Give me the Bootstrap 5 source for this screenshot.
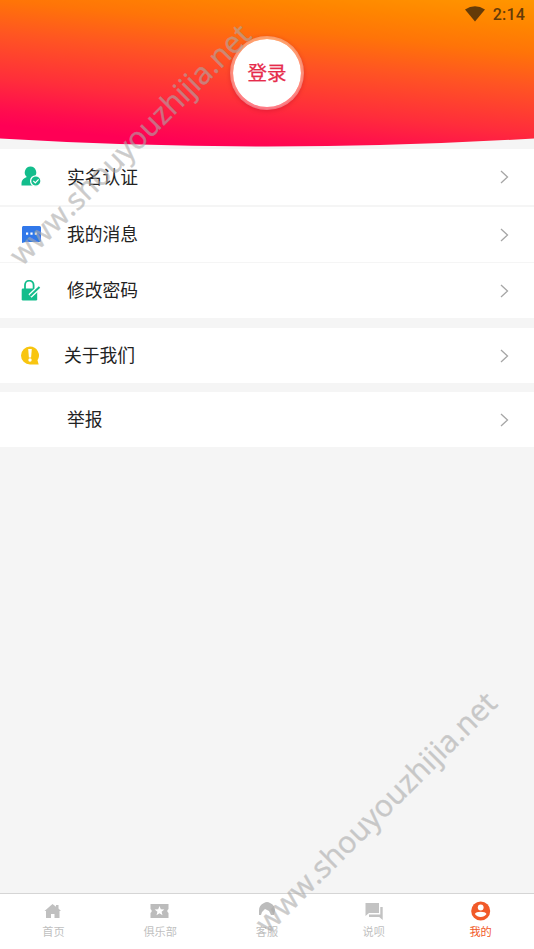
<!DOCTYPE html>
<html lang="zh-CN">
<head>
<meta charset="utf-8">
<meta name="viewport" content="width=device-width, initial-scale=1">
<title>我的</title>
<link href="https://cdn.jsdelivr.net/npm/bootstrap@5.3.0/dist/css/bootstrap.min.css" rel="stylesheet">
<style>
body{height:949px;overflow:hidden;background:#f5f5f5;font-family:Roboto,"Noto Sans CJK SC",sans-serif;color:#222}
.hero{height:149px}
.hero-bg{left:0;top:0;width:534px;height:149px}
.status{height:28px;padding-right:9px;color:#653b08;font-size:16px;letter-spacing:.2px;font-weight:500}
.status span{padding-top:1px}
.login{width:74px;height:74px;margin-top:8px;border:3px solid rgba(255,255,255,.38);background:#fff;background-clip:padding-box;color:#e62b4b;font-size:19.5px;line-height:1;padding-top:1px;-webkit-text-stroke:.25px #e62b4b;box-shadow:0 1px 4px rgba(160,0,30,.3)}
.entry{height:55px;padding:0 25px 0 20px;background:#fff;font-size:17.8px;line-height:24px;color:#222}
.entry svg{flex:none}
.entry .txt{margin-left:25px;padding-top:1px}
.about .txt{margin-left:22px}
.first{height:56px}
.second{margin-top:2px}
.third{margin-top:1px}
.about{margin-top:10px}
.report{margin-top:9px}
.tabs{height:56px;border-top:1px solid #d5d5d5;background:#fff}
.tab-item{color:#bfbfbf;font-size:11.2px;line-height:14px;width:20%;padding-top:7px}
.tab-item svg{margin-bottom:5px}
.tab-item.current{color:#f15a29}
.wm{left:0;top:0;pointer-events:none}
</style>
<script src="https://cdn.jsdelivr.net/npm/bootstrap@5.3.0/dist/js/bootstrap.bundle.min.js"></script>
</head>
<body class="d-flex flex-column position-relative">
<svg width="0" height="0" class="position-absolute"><defs><symbol id="chev" viewBox="0 0 10 16"><path d="M2 2 8.500 8 2 14" fill="none" stroke="#a6a6a6" stroke-width="1.300"/></symbol></defs></svg>
<header class="hero position-relative flex-shrink-0">
  <svg class="hero-bg position-absolute" viewBox="0 0 534 149">
    <defs><linearGradient id="heat" gradientUnits="userSpaceOnUse" x1="267" y1="-32" x2="249" y2="150"><stop offset="0" stop-color="#ff9a00"/><stop offset=".18" stop-color="#ff8500"/><stop offset=".32" stop-color="#ff7408"/><stop offset=".5" stop-color="#ff5522"/><stop offset=".75" stop-color="#ff2d3b"/><stop offset=".92" stop-color="#ff0c4e"/><stop offset="1" stop-color="#ff0055"/></linearGradient></defs>
    <path d="M0 0H534V138.500Q400 146.500 267 146.500T0 138.500Z" fill="url(#heat)"/>
  </svg>
  <div class="position-relative">
    <div class="status d-flex align-items-center justify-content-end">
      <svg class="me-2" width="20" height="16" viewBox="0 0 20 16"><path d="M0 3.500Q10-3 20 3.500L10 15.500Z" fill="currentColor"/></svg><span>2:14</span>
    </div>
    <div class="login rounded-circle mx-auto d-flex align-items-center justify-content-center">登录</div>
  </div>
</header>
<main class="flex-grow-1">
  <div class="entry first d-flex align-items-center">
    <svg width="22" height="22" viewBox="0 0 22 22"><path d="M10.500 .5a6 6 0 0 1 3.700 10.500c2 1 3.800 2.500 4.300 4.500l.5 4H1.500V17c0-3 2.500-5 5.300-6A6 6 0 0 1 10.500 .5z" fill="#13bd8c"/><circle cx="15.800" cy="15" r="5.200" fill="#13bd8c" stroke="#fff" stroke-width="1.300"/><path d="m13.300 14.800 2 2 3.300-3.500" fill="none" stroke="#fff" stroke-width="1.200"/></svg>
    <span class="txt">实名认证</span><svg class="ms-auto" width="10" height="16"><use href="#chev"/></svg>
  </div>
  <div class="entry second d-flex align-items-center">
    <svg width="22" height="22" viewBox="0 0 22 22"><path d="M3.200 2h16.300A1.500 1.500 0 0 1 21 3.500v13a1.500 1.500 0 0 1-1.500 1.500H5.500L2 19V3.500Q2 2 3.200 2z" fill="#3178ea"/><path d="M6 8.500h2.200v2.200H6zm4.400 0h2.200v2.200h-2.200zm4.400 0H17v2.200h-2.200z" fill="#fff"/></svg>
    <span class="txt">我的消息</span><svg class="ms-auto" width="10" height="16"><use href="#chev"/></svg>
  </div>
  <div class="entry third d-flex align-items-center">
    <svg width="22" height="22" viewBox="0 0 22 22"><path d="M5 10V5a4.300 4.300 0 0 1 8.600 0V10" fill="none" stroke="#13bd8c" stroke-width="1.800"/><rect x="1.700" y="8.500" width="15.500" height="12" rx="1.200" fill="#13bd8c"/><path d="m10 16 9.500-9" stroke="#fff" stroke-width="4.500"/><path d="m10 16 9.500-9" stroke="#13bd8c" stroke-width="2"/></svg>
    <span class="txt">修改密码</span><svg class="ms-auto" width="10" height="16"><use href="#chev"/></svg>
  </div>
  <div class="entry about d-flex align-items-center">
    <svg width="22" height="22" viewBox="0 0 22 22"><path d="M10 1.500a8.900 8.900 0 0 1 7.500 13.700L18.700 19.500H10a9 9 0 0 1 0-18z" fill="#f8c510"/><path d="M8.200 4h3.600l-.7 8.500H8.900z" fill="#fff"/><circle cx="10" cy="15" r="1.700" fill="#fff"/></svg>
    <span class="txt">关于我们</span><svg class="ms-auto" width="10" height="16"><use href="#chev"/></svg>
  </div>
  <div class="entry report d-flex align-items-center">
    <svg width="22" height="22"></svg>
    <span class="txt">举报</span><svg class="ms-auto" width="10" height="16"><use href="#chev"/></svg>
  </div>
</main>
<nav class="tabs d-flex flex-shrink-0">
  <div class="tab-item d-flex flex-column align-items-center"><svg width="20" height="20" viewBox="0 0 20 20"><path d="M9.500 3 1.500 10H3v7h5v-4h3.500v4h5v-7H18l-2.500-2.500V4h-2.500v1.800z" fill="#c0c0c0"/></svg>首页</div>
  <div class="tab-item d-flex flex-column align-items-center"><svg width="20" height="20" viewBox="0 0 20 20"><path d="M.5 3h18v5q-2.500 2 0 4v5H.5v-5q2.500-2 0-4z" fill="#bcbcbc"/><path d="m9.500 5 1.300 3.300 3.600.2-2.800 2.300.9 3.500-3-2-3 2 .9-3.500-2.800-2.300 3.600-.2z" fill="#fff"/></svg>俱乐部</div>
  <div class="tab-item d-flex flex-column align-items-center"><svg width="20" height="20" viewBox="0 0 20 20"><path d="M2 14V9.500A8 8 0 0 1 7 2q3-2 6 0a8 8 0 0 1 5 7.500L17 14h-3l-2-4-4-2-3 3-1 3z" fill="#bcbcbc"/></svg>客服</div>
  <div class="tab-item d-flex flex-column align-items-center"><svg width="20" height="20" viewBox="0 0 20 20"><path d="M1.500 2H15v10H5l-3.500 3z" fill="#c3c3c3"/><path d="M16.300 6H18.700v13l-3.500-3H5v-2.500h11.300z" fill="#c3c3c3"/></svg>说呗</div>
  <div class="tab-item current d-flex flex-column align-items-center"><svg width="20" height="20" viewBox="0 0 20 20"><circle cx="9.700" cy="10" r="9.500" fill="#f15a29"/><circle cx="9.700" cy="6.500" r="2.900" fill="#fff"/><path d="M3.900 13c1-3 10.600-3 11.600 0a7 7 0 0 1-11.600 0z" fill="#fff"/></svg>我的</div>
</nav>
<svg class="wm position-absolute" width="534" height="949" viewBox="0 0 534 949" fill="#aaa" stroke="#aaa" stroke-width=".4" opacity=".6" font-family="Open Sans, sans-serif" font-size="30">
  <text transform="translate(22 267) rotate(-44.900)" textLength="326">www.shouyouzhijia.net</text>
  <text transform="translate(268 935) rotate(-44.900)" textLength="326">www.shouyouzhijia.net</text>
</svg>
</body>
</html>
